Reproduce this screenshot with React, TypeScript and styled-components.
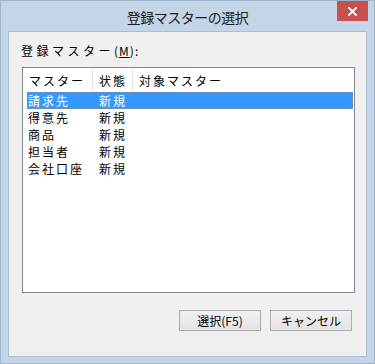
import React from 'react';
import styled, { createGlobalStyle } from 'styled-components';

interface MasterRow {
  name: string;
  status: string;
  target: string;
}

const rows: MasterRow[] = [
  { name: '請求先', status: '新規', target: '' },
  { name: '得意先', status: '新規', target: '' },
  { name: '商品', status: '新規', target: '' },
  { name: '担当者', status: '新規', target: '' },
  { name: '会社口座', status: '新規', target: '' },
];

const App: React.FC = () => {
  const selected = 0;

  return (
    <>
      <GlobalStyle />
      <Window>
        <TitleBar>
          <Title>登録マスターの選択</Title>
          <CloseButton aria-label="閉じる">
            <svg width="9" height="9" viewBox="0 0 9 9">
              <path d="M1 1 L8 8 M8 1 L1 8" stroke="#fff" strokeWidth="1.8" strokeLinecap="square" />
            </svg>
          </CloseButton>
        </TitleBar>
        <Client>
          <Label>
            登録マスター<Accel>
              (<u>M</u>):
            </Accel>
          </Label>
          <ListBox>
            <Header>
              <HeaderCell $width={70}>マスター</HeaderCell>
              <HeaderCell $width={40}>状態</HeaderCell>
              <HeaderCell $width={0} $last>
                対象マスター
              </HeaderCell>
            </Header>
            <Rows>
              {rows.map((row, i) => (
                <Row key={row.name} $selected={i === selected}>
                  <Cell $width={65} $indent={1}>
                    {row.name}
                  </Cell>
                  <Cell $width={40} $indent={7}>
                    {row.status}
                  </Cell>
                  <Cell $width={0} $indent={6}>
                    {row.target}
                  </Cell>
                </Row>
              ))}
            </Rows>
          </ListBox>
          <ButtonRow>
            <Button>選択(F5)</Button>
            <Button>キャンセル</Button>
          </ButtonRow>
        </Client>
      </Window>
    </>
  );
};

export default App;

const GlobalStyle = createGlobalStyle`
  html, body {
    margin: 0;
    padding: 0;
    background: #c3d5e7;
  }
  * {
    box-sizing: border-box;
  }
`;

const Window = styled.div`
  width: 375px;
  height: 364px;
  background: #c3d5e7;
  border: 1px solid #9db4cc;
  display: flex;
  flex-direction: column;
  font-family: 'Noto Sans CJK JP', 'Liberation Sans', sans-serif;
  color: #000;
`;

const TitleBar = styled.div`
  height: 30px;
  display: flex;
  align-items: center;
  justify-content: center;
  position: relative;
`;

const Title = styled.div`
  font-size: 14px;
  letter-spacing: -0.5px;
  color: #1a1a1a;
  margin-top: 1px;
`;

const CloseButton = styled.div`
  position: absolute;
  top: 0;
  right: 6px;
  width: 31px;
  height: 20px;
  background: #c75050;
  display: flex;
  align-items: center;
  justify-content: center;
`;

const Client = styled.div`
  margin: 0 7px;
  height: 326px;
  background: #f0f0f0;
  border: 1px solid #aabdd2;
  padding: 11px 11px 0 11px;
  display: flex;
  flex-direction: column;
`;

const Label = styled.div`
  font-size: 12px;
  line-height: 16px;
  letter-spacing: 3.5px;
  padding-left: 1px;
`;

const Accel = styled.span`
  letter-spacing: 1px;

  u {
    text-decoration: underline;
  }
`;

const ListBox = styled.div`
  margin: 8px 0 0 2px;
  width: 333px;
  height: 226px;
  background: #fff;
  border: 1px solid #828790;
  display: flex;
  flex-direction: column;
`;

const Header = styled.div`
  height: 24px;
  display: flex;
  font-size: 12px;
  letter-spacing: 2px;
`;

const HeaderCell = styled.div<{ $width: number; $last?: boolean }>`
  ${p => (p.$width ? `width: ${p.$width}px;` : 'flex: 1;')}
  border-right: ${p => (p.$last ? 'none' : '1px solid #e5e5e5')};
  padding-left: 6px;
  display: flex;
  align-items: center;
  white-space: nowrap;
  overflow: hidden;
`;

const Rows = styled.div`
  padding: 0 1px 0 4px;
  display: flex;
  flex-direction: column;
`;

const Row = styled.div<{ $selected?: boolean }>`
  height: 17px;
  display: flex;
  align-items: center;
  font-size: 12px;
  letter-spacing: 2px;
  background: ${p => (p.$selected ? '#3399ff' : 'transparent')};
  color: ${p => (p.$selected ? '#fff' : '#000')};
  outline: ${p => (p.$selected ? '1px dotted #6b8fb8' : 'none')};
  outline-offset: -1px;
`;

const Cell = styled.div<{ $width: number; $indent: number }>`
  ${p => (p.$width ? `width: ${p.$width}px;` : 'flex: 1;')}
  padding-left: ${p => p.$indent}px;
  white-space: nowrap;
`;

const ButtonRow = styled.div`
  margin-top: 17px;
  padding-right: 3px;
  display: flex;
  justify-content: flex-end;
  gap: 9px;
`;

const Button = styled.button`
  width: 82px;
  height: 21px;
  padding: 0;
  font-family: 'Noto Sans CJK JP', 'Liberation Sans', sans-serif;
  font-size: 12px;
  color: #000;
  background: linear-gradient(#f0f0f0, #e5e5e5);
  border: 1px solid #acacac;
  border-radius: 0;
`;
